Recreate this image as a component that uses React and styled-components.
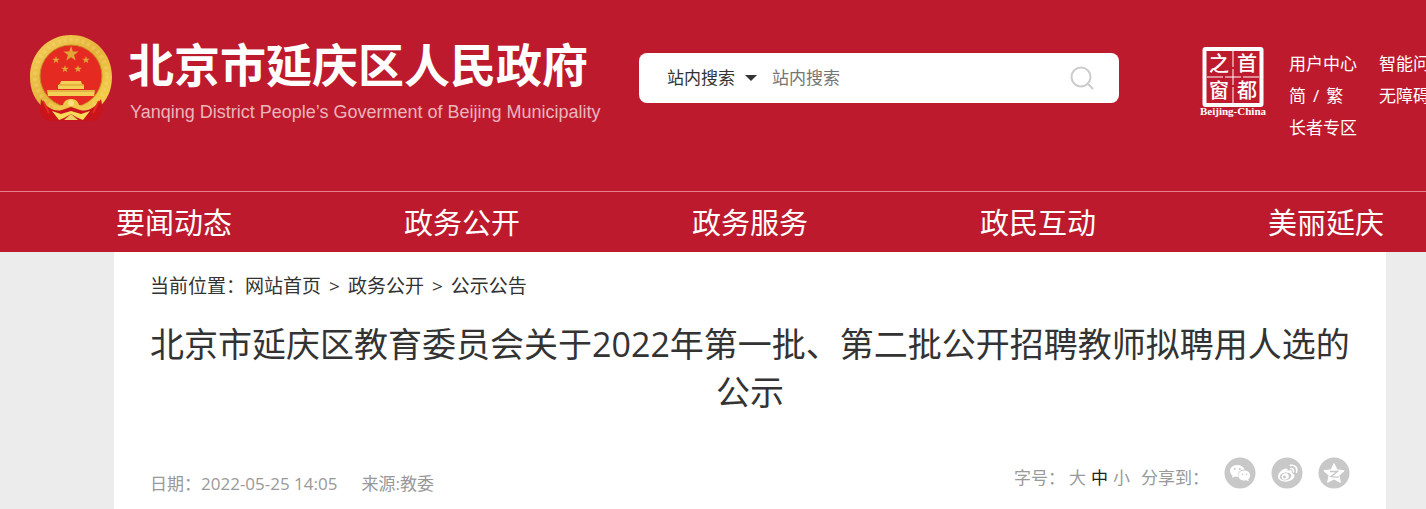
import React from "react";
import styled, { createGlobalStyle } from "styled-components";

const GlobalStyle = createGlobalStyle`
  * { box-sizing: border-box; }
  body {
    margin: 0;
    background: #ececec;
    color: #333;
    font-family: "Open Sans", "Noto Sans CJK SC", sans-serif;
    font-size: 17px;
    line-height: 32px;
  }
  a { color: inherit; text-decoration: none; }
  h1, p, ul, ol { margin: 0; padding: 0; }
  ul, ol { list-style: none; }
  button, input, select { font: inherit; border: 0; background: none; padding: 0; margin: 0; }
`;

const Viewport = styled.div`
  overflow: hidden;
`;

const Page = styled.div`
  display: flex;
  flex-direction: column;
  min-width: 1500px;
  min-height: 100vh;
`;

const Header = styled.header`
  background: #bd1a2d;
  color: #fff;
`;

const Masthead = styled.div`
  display: flex;
  align-items: flex-start;
  width: 1440px;
  height: 191px;
  margin: 0 auto;
  padding-top: 32px;
  > * { flex-shrink: 0; }
`;

const Brand = styled.a`
  display: flex;
  gap: 16px;
  width: 609px;
`;

const Emblem = styled.svg`
  flex: none;
  width: 82px;
  height: 88px;
  margin-top: 2px;
`;

const BrandText = styled.span`
  display: flex;
  flex-direction: column;
  white-space: nowrap;
`;

const BrandName = styled.span`
  font-size: 46px;
  font-weight: 700;
  line-height: 64px;
`;

const BrandEnglish = styled.span`
  padding: 0 2px;
  color: #ecb5bb;
  font-family: "Liberation Sans", sans-serif;
  font-size: 18px;
  line-height: 32px;
`;

const SearchForm = styled.form`
  display: flex;
  align-items: center;
  width: 480px;
  height: 50px;
  margin-top: 21px;
  padding: 0 24px 0 28px;
  border-radius: 8px;
  background: #fff;
`;

const ScopeField = styled.div`
  display: flex;
  align-items: center;
  gap: 10px;
  width: 105px;
`;

const ScopeSelect = styled.select`
  appearance: none;
  width: 68px;
  height: 32px;
  color: #333;
  outline: 0;
`;

const Caret = styled.svg`
  width: 12px;
  height: 6px;
  pointer-events: none;
`;

const SearchInput = styled.input`
  flex: 1;
  min-width: 0;
  height: 32px;
  color: #333;
  outline: 0;
  &::placeholder { color: #757575; opacity: 1; }
`;

const SearchButton = styled.button`
  display: flex;
  cursor: pointer;
`;

const CapitalLink = styled.a`
  margin: 12px 0 0 80px;
  line-height: 0;
`;

const UtilityLinks = styled.ul`
  display: grid;
  grid-template-columns: 68px 102px;
  column-gap: 22px;
  margin: 16px 0 0 22px;
  white-space: nowrap;
`;

const Slash = styled.span`
  padding: 0 7px;
`;

const Nav = styled.nav`
  border-top: 1px solid #e8808b;
`;

const NavList = styled.ul`
  display: flex;
  width: 1440px;
  margin: 0 auto;
`;

const NavItem = styled.li`
  flex: 1;
  padding-top: 2px;
  font-size: 29px;
  line-height: 58px;
  text-align: center;
`;

const Main = styled.main`
  flex: 1;
  width: 1272px;
  margin: 0 auto;
  padding: 18px 36px 8px;
  background: #fff;
`;

const Breadcrumb = styled.ol`
  display: flex;
  font-size: 19px;
`;

const Separator = styled.span`
  padding: 0 8px;
`;

const Title = styled.h1`
  margin: 18px -8px 0;
  font-size: 34px;
  font-weight: 400;
  line-height: 48px;
  text-align: center;
`;

const MetaBar = styled.div`
  display: flex;
  justify-content: space-between;
  margin-top: 36px;
  color: #999;
`;

const MetaInfo = styled.p`
  display: flex;
  gap: 24px;
  padding-top: 16px;
`;

const Tools = styled.div`
  display: flex;
  align-items: flex-start;
  padding-top: 10px;
`;

const SizeButton = styled.button`
  width: 17px;
  height: 32px;
  margin-left: ${(p) => (p.$first ? 4 : 5)}px;
  color: ${(p) => (p.$active ? "#222" : "#999")};
  line-height: 32px;
  cursor: pointer;
`;

const ShareLabel = styled.span`
  margin: 0 15px 0 11px;
`;

const ShareList = styled.ul`
  display: flex;
  gap: 15px;
  margin-top: -5px;
`;

const ShareIcon = styled.svg`
  display: block;
  width: 32px;
  height: 32px;
`;

const star = (cx, cy, r) =>
  Array.from({ length: 10 }, (_, i) => {
    const a = -Math.PI / 2 + (i * Math.PI) / 5;
    const q = i % 2 ? r * 0.4 : r;
    return `${(cx + q * Math.cos(a)).toFixed(2)},${(cy + q * Math.sin(a)).toFixed(2)}`;
  }).join(" ");

function NationalEmblem() {
  return (
    <Emblem viewBox="0 0 82 88" aria-hidden="true">
      <defs>
        <linearGradient id="gold" x1="0" y1="0" x2="1" y2="1">
          <stop offset="0" stopColor="#f5cf5a" />
          <stop offset=".5" stopColor="#e5b33b" />
          <stop offset="1" stopColor="#f8d74f" />
        </linearGradient>
      </defs>
      <path d="M11 62 L71 62 73 77 69 84 62 87 H20L13 84 10 77Z" fill="#c9141c" />
      <path d="M41 1C18 1 0 19 0 43c0 13 5 24 14 31 8 7 16 6 27 6s19 1 27-6c9-7 14-18 14-31C82 19 64 1 41 1Z" fill="url(#gold)" />
      <circle cx="41" cy="42" r="36" fill="none" stroke="#f8df86" strokeWidth="4" strokeDasharray="3 3" opacity=".3" />
      <circle cx="41" cy="42" r="31" fill="#e52a22" stroke="#c98a24" />
      <polygon points={star(41, 20, 8)} fill="#dfa535" />
      {[[26, 26], [56, 26], [35, 35], [48, 35]].map(([x, y]) => (
        <polygon key={x} points={star(x, y, 4)} fill="#dfa535" />
      ))}
      <path d="M31 47h20l1 3 2 1v4H28v-4l2-1zM17 56h48l-1 6H18z" fill="#f3cf55" />
      <path d="M29 51h25M17 57h48" stroke="#d79b35" fill="none" />
      <path d="M22 63h38c-3 5-6 7-10 8-2-4-5-6-9-6s-7 2-9 6c-4-1-7-3-10-8Z" fill="#e52a22" />
      <path d="M11 65c6 9 13 13 21 11l9-3 9 3c8 2 15-2 21-11l2 12-4 7-7 3H20l-7-3-3-7z" fill="#c9141c" />
      <path d="M19 67c5 5 9 6 14 4 1-4 4-6 8-6s7 2 8 6c5 2 9 1 14-4-3 7-8 10-14 8-3-3-13-3-16 0-6 2-11-1-14-8Z" fill="#f2c84c" />
      <circle cx="41" cy="69" r="3" fill="#fae17b" />
      <path d="M22 77l9 3 10-3 10 3 9-3-7 9-5-2-7-4-7 4-5 2z" fill="#f8dc59" />
      <path d="M34 86l7-6 7 6z" fill="#ead067" />
      <path d="M13 67l6 12M69 67l-6 12" stroke="#e52a22" strokeWidth="2" />
    </Emblem>
  );
}

function CapitalSeal() {
  return (
    <svg width="68" height="74" viewBox="0 0 68 74" role="img" aria-label="首都之窗">
      <rect x="5.5" y="5" width="57" height="56" rx="1" fill="none" stroke="#fff" strokeWidth="4" />
      <path d="M34 7V59M8 33H60" stroke="#fff" strokeDasharray="16 2" />
      <g fill="#fff" fontFamily="Noto Sans CJK SC, sans-serif" fontSize="20" fontWeight="500" textAnchor="middle">
        <text x="20" y="27">之</text>
        <text x="48" y="27">首</text>
        <text x="20" y="54">窗</text>
        <text x="48" y="54">都</text>
      </g>
      <text x="34" y="71" fill="#fff" fontFamily="Liberation Serif, serif" fontSize="11" fontWeight="700" textAnchor="middle">Beijing-China</text>
    </svg>
  );
}

function WechatIcon() {
  return (
    <ShareIcon viewBox="0 0 32 32" aria-hidden="true">
      <circle cx="16" cy="16" r="15.5" fill="#c8c8c8" />
      <path d="M13.2 8C9 8 6 10.700 6 14c0 1.900 1 3.500 2.600 4.600L8 21l2.900-1.500 3.400.4c-1.200-4.300 2-7.500 6.300-7.400C19.800 9.900 17 8 13.200 8Z" fill="#fff" />
      <path d="M20.300 13.500c-3.600 0-6 2.200-6 5s2.500 5 6 5l2.100-.3 2.400 1.300-.6-2.200c1.300-1 2-2.300 2-3.800 0-2.800-2.600-5-5.900-5Z" fill="#fff" />
      <g fill="#c8c8c8"><circle cx="10.800" cy="12" r="1" /><circle cx="15.700" cy="12" r="1" /><circle cx="18.500" cy="17.200" r=".8" /><circle cx="22.500" cy="17.200" r=".8" /></g>
    </ShareIcon>
  );
}

function WeiboIcon() {
  return (
    <ShareIcon viewBox="0 0 32 32" aria-hidden="true">
      <circle cx="16" cy="16" r="15.500" fill="#c8c8c8" />
      <path d="M14.500 11.500c-3.500.6-7.500 4.600-7.500 8 0 3.200 3.800 5.200 7.700 5.200 5 0 8.700-2.900 8.700-5.600 0-1.700-1.400-2.600-2.700-3 .6-1.500.4-3.900-4.200-2.400.5-1.600-.1-2.500-2-2.200Z" fill="#fff" />
      <ellipse cx="14.600" cy="19.400" rx="5.800" ry="3.900" transform="rotate(-8 14.600 19.400)" fill="#c8c8c8" />
      <ellipse cx="14.200" cy="19.500" rx="3.700" ry="3" transform="rotate(-15 14.200 19.500)" fill="#fff" />
      <circle cx="13.500" cy="20" r="1.400" fill="#c8c8c8" />
      <path d="M19.300 8.400c4.700-1 7.500 2.600 6.200 6.900M19.700 11.700c2-.4 3.300 1 2.700 3" fill="none" stroke="#fff" strokeWidth="1.600" strokeLinecap="round" />
    </ShareIcon>
  );
}

function QzoneIcon() {
  return (
    <ShareIcon viewBox="0 0 32 32" aria-hidden="true">
      <circle cx="16" cy="16" r="15.500" fill="#c8c8c8" />
      <path d="M16 6.500l3 6.400 7.200.8-5.300 4.800 1.500 6.900-6.400-3.500-6.400 3.500 1.500-6.900-5.300-4.800 7.200-.8z" fill="#fff" stroke="#fff" strokeLinejoin="round" />
      <path d="M12 14.500h7.600l-6.800 5.200c2.700.5 5.300.6 8 .1" fill="none" stroke="#c8c8c8" strokeWidth="1.300" />
    </ShareIcon>
  );
}

const utilityLinks = [
  ["user", "用户中心"],
  ["ask", "智能问答"],
  ["script", <>简<Slash>/</Slash>繁</>],
  ["access", "无障碍"],
  ["senior", "长者专区"],
];
const navLinks = ["要闻动态", "政务公开", "政务服务", "政民互动", "美丽延庆"];
const crumbs = ["网站首页", "政务公开", "公示公告"];
const shares = [
  ["微信", WechatIcon],
  ["微博", WeiboIcon],
  ["QQ空间", QzoneIcon],
];

export default function App() {
  return (
    <Viewport>
      <GlobalStyle />
      <Page>
        <Header>
          <Masthead>
            <Brand href="#">
              <NationalEmblem />
              <BrandText>
                <BrandName>北京市延庆区人民政府</BrandName>
                <BrandEnglish>Yanqing District People’s Goverment of Beijing Municipality</BrandEnglish>
              </BrandText>
            </Brand>
            <SearchForm role="search" onSubmit={(e) => e.preventDefault()}>
              <ScopeField>
                <ScopeSelect aria-label="搜索范围">
                  <option>站内搜索</option>
                </ScopeSelect>
                <Caret viewBox="0 0 12 6" aria-hidden="true"><path d="M0 0h12L6 6z" fill="#333" /></Caret>
              </ScopeField>
              <SearchInput type="text" aria-label="站内搜索" placeholder="站内搜索" />
              <SearchButton type="submit" aria-label="搜索">
                <svg width="26" height="26" viewBox="0 0 26 26" fill="none" stroke="#ccc" strokeWidth="2">
                  <circle cx="12" cy="12" r="9.500" />
                  <path d="M18.500 18.500l5 5" strokeLinecap="round" />
                </svg>
              </SearchButton>
            </SearchForm>
            <CapitalLink href="#"><CapitalSeal /></CapitalLink>
            <UtilityLinks>
              {utilityLinks.map(([id, label]) => <li key={id}><a href="#">{label}</a></li>)}
            </UtilityLinks>
          </Masthead>
          <Nav>
            <NavList>
              {navLinks.map((t) => <NavItem key={t}><a href="#">{t}</a></NavItem>)}
            </NavList>
          </Nav>
        </Header>
        <Main>
          <Breadcrumb>
            <li>当前位置：</li>
            {crumbs.map((t, i) => (
              <li key={t}>{i > 0 && <Separator>&gt;</Separator>}<a href="#">{t}</a></li>
            ))}
          </Breadcrumb>
          <Title>北京市延庆区教育委员会关于2022年第一批、第二批公开招聘教师拟聘用人选的公示</Title>
          <MetaBar>
            <MetaInfo>
              <span>日期：2022-05-25 14:05</span>
              <span>来源:教委</span>
            </MetaInfo>
            <Tools>
              <span>字号：</span>
              <SizeButton type="button" $first>大</SizeButton>
              <SizeButton type="button" $active>中</SizeButton>
              <SizeButton type="button">小</SizeButton>
              <ShareLabel>分享到：</ShareLabel>
              <ShareList>
                {shares.map(([label, Icon]) => (
                  <li key={label}><a href="#" aria-label={label}><Icon /></a></li>
                ))}
              </ShareList>
            </Tools>
          </MetaBar>
        </Main>
      </Page>
    </Viewport>
  );
}
